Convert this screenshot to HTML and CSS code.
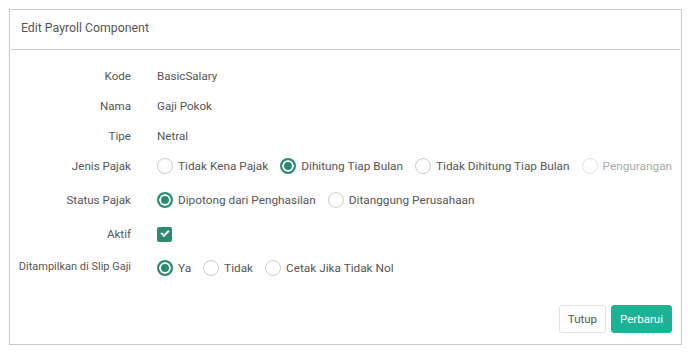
FILE: index.html
```html
<!DOCTYPE html>
<html lang="en">
<head>
    <meta charset="UTF-8">
    <title>Edit Payroll Component</title>
    <link rel="stylesheet" href="styles.css">
</head>
<body>

    <div class="panel">
        <div class="panel-head">Edit Payroll Component</div>
        <div class="panel-body">
            <div class="row">
                <div class="label">Kode</div>
                <div class="value">BasicSalary</div>
            </div>
            <div class="row">
                <div class="label">Nama</div>
                <div class="value">Gaji Pokok</div>
            </div>
            <div class="row">
                <div class="label">Tipe</div>
                <div class="value">Netral</div>
            </div>
            <div class="row">
                <div class="label">Jenis Pajak</div>
                <div class="value options">
                    <label class="opt"><input type="radio" name="jenis"> Tidak Kena Pajak</label>
                    <label class="opt"><input type="radio" name="jenis" checked> Dihitung Tiap Bulan</label>
                    <label class="opt"><input type="radio" name="jenis"> Tidak Dihitung Tiap Bulan</label>
                    <label class="opt disabled"><input type="radio" name="jenis" disabled> Pengurangan</label>
                </div>
            </div>
            <div class="row tall">
                <div class="label">Status Pajak</div>
                <div class="value options">
                    <label class="opt"><input type="radio" name="status" checked> Dipotong dari Penghasilan</label>
                    <label class="opt"><input type="radio" name="status"> Ditanggung Perusahaan</label>
                </div>
            </div>
            <div class="row">
                <div class="label">Aktif</div>
                <div class="value">
                    <input class="check" type="checkbox" checked>
                </div>
            </div>
            <div class="row tall">
                <div class="label long">Ditampilkan di Slip Gaji</div>
                <div class="value options">
                    <label class="opt"><input type="radio" name="slip" checked> Ya</label>
                    <label class="opt"><input type="radio" name="slip"> Tidak</label>
                    <label class="opt"><input type="radio" name="slip"> Cetak Jika Tidak Nol</label>
                </div>
            </div>
        </div>
        <div class="panel-foot">
            <button class="btn">Tutup</button>
            <button class="btn btn-primary">Perbarui</button>
        </div>
    </div>

</body>
</html>
```

FILE: styles.css
```css
* {
    margin: 0;
    padding: 0;
    box-sizing: border-box;
    font-family: 'Roboto', 'Liberation Sans', sans-serif;
}

body {
    background: #fff;
    color: #555;
    font-size: 11.6px;
    padding: 9px 11px 10px 9px;
}

.panel {
    border: 1px solid #c8c8c8;
    height: 336px;
    display: flex;
    flex-direction: column;
}

.panel-head {
    font-size: 12.3px;
    color: #555;
    height: 40px;
    line-height: 36px;
    padding-left: 10px;
    margin: 0 1px;
    border-bottom: 1px solid #c8c8c8;
}

.panel-body {
    padding-top: 11px;
    flex: 1;
}

.row {
    display: flex;
    align-items: center;
    height: 30px;
}

.row.tall {
    height: 38px;
}

.label {
    width: 121px;
    text-align: right;
    flex-shrink: 0;
    white-space: nowrap;
}

.label.long {
    font-size: 11px;
    margin-top: -3px;
}

.value {
    margin-left: 26px;
    display: flex;
    align-items: center;
}

.options {
    gap: 12px;
}

.opt {
    display: flex;
    align-items: center;
    gap: 5px;
    font-size: 11.8px;
    white-space: nowrap;
}

.opt input {
    appearance: none;
    width: 16px;
    height: 16px;
    border: 1px solid #ccc;
    border-radius: 50%;
    background: #fff;
}

.opt input:checked {
    border: 2px solid #2b8a70;
    box-shadow: inset 0 0 0 2px #fff;
    background: #2b8a70;
}

.opt.disabled {
    color: #aaa;
}

.opt.disabled input {
    border-color: #e2e2e2;
}

.check {
    appearance: none;
    width: 15px;
    height: 15px;
    border-radius: 2px;
    background: #2b8a70;
    position: relative;
}

.check::after {
    content: "";
    position: absolute;
    left: 4px;
    top: 3px;
    width: 6px;
    height: 3px;
    border-left: 2px solid #fff;
    border-bottom: 2px solid #fff;
    transform: rotate(-45deg);
}

.panel-foot {
    display: flex;
    justify-content: flex-end;
    gap: 5px;
    padding: 0 9px 11px 0;
}

.btn {
    font-size: 11.5px;
    height: 28px;
    padding: 0 8px;
    border: 1px solid #e3e3e3;
    border-radius: 3px;
    background: #fff;
    color: #555;
}

.btn-primary {
    background: #1cb394;
    border-color: #1cb394;
    color: #fff;
}
```
